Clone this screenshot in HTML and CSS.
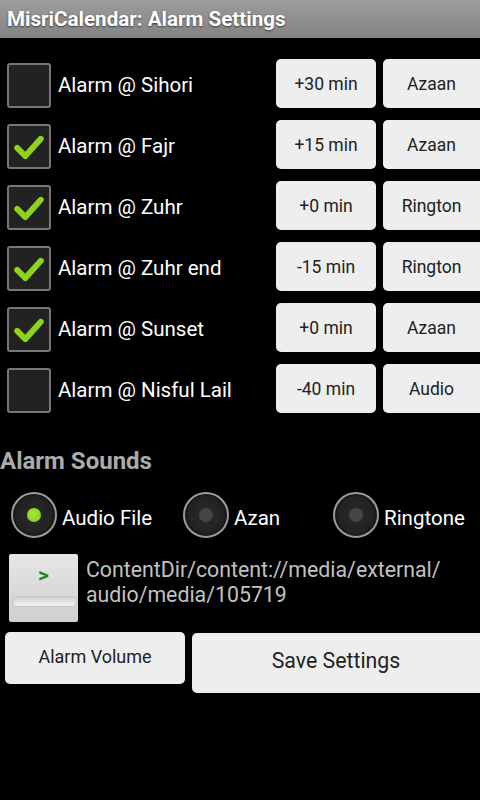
FILE: index.html
```html
<!DOCTYPE html>
<html>
<head>
<meta charset="utf-8">
<link rel="stylesheet" href="styles.css">
</head>
<body>
<div class="titlebar">MisriCalendar: Alarm Settings</div>
<div class="alarms">
  <div class="row">
    <div class="check"></div>
    <div class="label">Alarm @ Sihori</div>
    <div class="btn offset">+30 min</div>
    <div class="btn sound">Azaan</div>
  </div>
  <div class="row">
    <div class="check on"><svg viewBox="0 0 44 44" width="40" height="40"><path d="M9 23 L18 32 L35 13" fill="none" stroke="#8ed21c" stroke-width="6.5" stroke-linecap="round" stroke-linejoin="round"/></svg></div>
    <div class="label">Alarm @ Fajr</div>
    <div class="btn offset">+15 min</div>
    <div class="btn sound">Azaan</div>
  </div>
  <div class="row">
    <div class="check on"><svg viewBox="0 0 44 44" width="40" height="40"><path d="M9 23 L18 32 L35 13" fill="none" stroke="#8ed21c" stroke-width="6.5" stroke-linecap="round" stroke-linejoin="round"/></svg></div>
    <div class="label">Alarm @ Zuhr</div>
    <div class="btn offset">+0 min</div>
    <div class="btn sound">Rington</div>
  </div>
  <div class="row">
    <div class="check on"><svg viewBox="0 0 44 44" width="40" height="40"><path d="M9 23 L18 32 L35 13" fill="none" stroke="#8ed21c" stroke-width="6.5" stroke-linecap="round" stroke-linejoin="round"/></svg></div>
    <div class="label">Alarm @ Zuhr end</div>
    <div class="btn offset">-15 min</div>
    <div class="btn sound">Rington</div>
  </div>
  <div class="row">
    <div class="check on"><svg viewBox="0 0 44 44" width="40" height="40"><path d="M9 23 L18 32 L35 13" fill="none" stroke="#8ed21c" stroke-width="6.5" stroke-linecap="round" stroke-linejoin="round"/></svg></div>
    <div class="label">Alarm @ Sunset</div>
    <div class="btn offset">+0 min</div>
    <div class="btn sound">Azaan</div>
  </div>
  <div class="row">
    <div class="check"></div>
    <div class="label">Alarm @ Nisful Lail</div>
    <div class="btn offset">-40 min</div>
    <div class="btn sound">Audio</div>
  </div>
</div>
<div class="section">Alarm Sounds</div>
<div class="radios">
  <div class="radio r1"><div class="ring"><div class="dot on"></div></div><span>Audio File</span></div>
  <div class="radio r2"><div class="ring"><div class="dot"></div></div><span>Azan</span></div>
  <div class="radio r3"><div class="ring"><div class="dot"></div></div><span>Ringtone</span></div>
</div>
<div class="file">
  <div class="play"><span class="gt">&gt;</span><div class="bar"></div></div>
  <div class="path">ContentDir/content://media/external/<br>audio/media/105719</div>
</div>
<div class="bottom">
  <div class="btn volume">Alarm Volume</div>
  <div class="btn save">Save Settings</div>
</div>
</body>
</html>
```
FILE: styles.css
```css
html, body {
  margin: 0;
  padding: 0;
  background: #000;
  width: 480px;
  height: 800px;
  overflow: hidden;
  font-family: Roboto, "Noto Sans", sans-serif;
}
.titlebar {
  height: 38px;
  line-height: 38px;
  padding-left: 7px;
  background: linear-gradient(#9c9c9c, #838383);
  color: #fff;
  font-weight: bold;
  font-size: 20.6px;
  text-shadow: 0 1px 2px rgba(0,0,0,0.6);
}
.alarms {
  padding-top: 21px;
}
.row {
  display: flex;
  align-items: center;
  height: 49px;
  margin-bottom: 12px;
}
.check {
  box-sizing: border-box;
  width: 44px;
  height: 45px;
  margin-left: 7px;
  margin-top: 4px;
  border: 2px solid #777;
  border-radius: 3px;
  background: #222;
  display: flex;
  align-items: center;
  justify-content: center;
}
.label {
  flex: 1;
  margin-left: 7px;
  color: #fff;
  font-size: 20.5px;
  margin-top: 2px;
}
.btn {
  box-sizing: border-box;
  background: #eeeeee;
  color: #222;
  border-radius: 5px;
  display: flex;
  align-items: center;
  justify-content: center;
  font-size: 17.5px;
}
.offset {
  width: 100px;
  height: 49px;
  margin-right: 7px;
}
.sound {
  width: 97px;
  height: 49px;
  border-radius: 5px 0 0 5px;
}
.section {
  margin-top: 34px;
  color: #ababab;
  font-weight: bold;
  font-size: 24px;
  line-height: 28px;
  padding-left: 0;
}
.radios {
  position: relative;
  height: 46px;
  margin-top: 17px;
}
.radio {
  position: absolute;
  top: 0;
  display: flex;
  align-items: center;
  color: #fff;
  font-size: 20.5px;
}
.radio span {
  margin-top: 6px;
}
.r1 { left: 11px; }
.r2 { left: 183px; }
.r3 { left: 333px; }
.ring {
  box-sizing: border-box;
  width: 46px;
  height: 46px;
  border-radius: 50%;
  border: 2px solid #9a9a9a;
  background: radial-gradient(circle, #2a2a2a 0, #222 60%, #151515 70%, #151515 100%);
  display: flex;
  align-items: center;
  justify-content: center;
  margin-right: 5px;
}
.dot {
  width: 14px;
  height: 14px;
  border-radius: 50%;
  background: #444;
}
.dot.on {
  background: radial-gradient(circle at 45% 40%, #a6e63a, #84c81a);
}
.file {
  display: flex;
  margin-top: 16px;
  padding-left: 9px;
}
.play {
  position: relative;
  width: 69px;
  height: 68px;
  background: linear-gradient(#e6e6e6, #cfcfcf);
  border-radius: 2px;
}
.gt {
  position: absolute;
  left: 29px;
  top: 9px;
  color: #1a8a1a;
  font-weight: bold;
  font-size: 21px;
  line-height: 24px;
}
.bar {
  position: absolute;
  left: 4px;
  top: 43px;
  width: 63px;
  height: 9px;
  border-radius: 5px;
  background: linear-gradient(#d0d0d0, #f4f4f4);
  box-shadow: 0 0 0 1px #c4c4c4;
}
.path {
  margin-left: 8px;
  color: #c2c2c2;
  font-size: 21.3px;
  line-height: 25px;
  margin-top: 3px;
}
.bottom {
  display: flex;
  align-items: flex-start;
  margin-top: 10px;
  padding-left: 5px;
}
.volume {
  width: 180px;
  height: 52px;
  font-size: 18px;
  padding-bottom: 4px;
}
.save {
  margin-left: 7px;
  margin-top: 1px;
  width: 288px;
  height: 60px;
  font-size: 21.3px;
  padding-bottom: 6px;
  border-radius: 5px 0 0 5px;
}
```
